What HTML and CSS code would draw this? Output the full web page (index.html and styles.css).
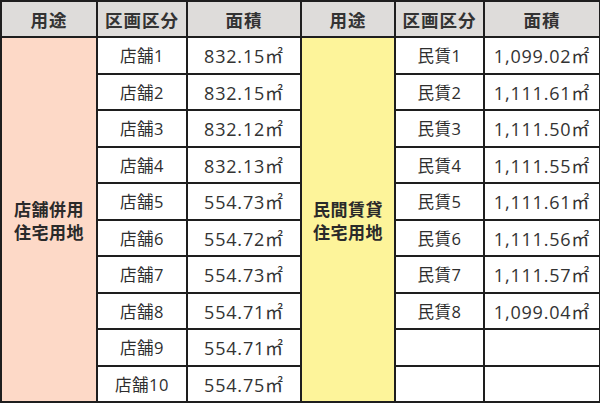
FILE: index.html
```html
<!DOCTYPE html>
<html lang="ja">
<head>
<meta charset="utf-8">
<link rel="stylesheet" href="styles.css">
</head>
<body>
<table class="lots">
  <colgroup>
    <col class="c-use"><col class="c-lot"><col class="c-area">
    <col class="c-use2"><col class="c-lot2"><col class="c-area2">
  </colgroup>
  <thead>
    <tr class="head">
      <th>用途</th><th>区画区分</th><th>面積</th>
      <th class="split">用途</th><th>区画区分</th><th>面積</th>
    </tr>
  </thead>
  <tbody>
    <tr>
      <td class="use shop" rowspan="10">店舗併用<br>住宅用地</td>
      <td class="lot">店舗1</td><td class="area">832.15㎡</td>
      <td class="use rent split" rowspan="10">民間賃貸<br>住宅用地</td>
      <td class="lot">民賃1</td><td class="area">1,099.02㎡</td>
    </tr>
    <tr><td class="lot">店舗2</td><td class="area">832.15㎡</td><td class="lot">民賃2</td><td class="area">1,111.61㎡</td></tr>
    <tr><td class="lot">店舗3</td><td class="area">832.12㎡</td><td class="lot">民賃3</td><td class="area">1,111.50㎡</td></tr>
    <tr><td class="lot">店舗4</td><td class="area">832.13㎡</td><td class="lot">民賃4</td><td class="area">1,111.55㎡</td></tr>
    <tr><td class="lot">店舗5</td><td class="area">554.73㎡</td><td class="lot">民賃5</td><td class="area">1,111.61㎡</td></tr>
    <tr><td class="lot">店舗6</td><td class="area">554.72㎡</td><td class="lot">民賃6</td><td class="area">1,111.56㎡</td></tr>
    <tr><td class="lot">店舗7</td><td class="area">554.73㎡</td><td class="lot">民賃7</td><td class="area">1,111.57㎡</td></tr>
    <tr><td class="lot">店舗8</td><td class="area">554.71㎡</td><td class="lot">民賃8</td><td class="area">1,099.04㎡</td></tr>
    <tr><td class="lot">店舗9</td><td class="area">554.71㎡</td><td class="lot"></td><td class="area"></td></tr>
    <tr><td class="lot">店舗10</td><td class="area">554.75㎡</td><td class="lot"></td><td class="area"></td></tr>
  </tbody>
</table>
</body>
</html>
```

FILE: styles.css
```css
html, body {
  margin: 0;
  padding: 0;
  background: #ffffff;
}

body {
  width: 600px;
  height: 404px;
  overflow: hidden;
  font-family: "Noto Sans CJK JP", "Noto Sans", sans-serif;
  color: #2e2e2e;
}

.lots {
  width: 599px;
  height: 403px;
  border-collapse: collapse;
  table-layout: fixed;
  border: 2px solid #1e1e1e;
}

.c-use { width: 96px; }
.c-lot { width: 90px; }
.c-area { width: 114px; }
.c-use2 { width: 94px; }
.c-lot2 { width: 89px; }
.c-area2 { width: 116px; }

.lots th,
.lots td {
  border: 2px solid #1e1e1e;
  padding: 0;
  text-align: center;
  vertical-align: middle;
}

.head {
  height: 36px;
}

.head th {
  background: #dedcda;
  font-size: 17.5px;
  font-weight: 700;
  color: #333333;
  letter-spacing: 1px;
}

.lots tbody tr {
  height: 36.5px;
}

.lot {
  font-family: "Open Sans", "Noto Sans CJK JP", sans-serif;
  font-size: 16.5px;
  font-weight: 400;
  background: #ffffff;
  letter-spacing: 0.5px;
}

.area {
  font-family: "Open Sans", "Noto Sans CJK JP", sans-serif;
  font-size: 18px;
  font-weight: 400;
  background: #ffffff;
  letter-spacing: 0.8px;
  color: #333333;
}

.use {
  font-size: 17px;
  font-weight: 700;
  line-height: 23px;
  letter-spacing: 0.5px;
  color: #2a2a2a;
}

.shop {
  background: #fdd9c7;
}

.rent {
  background: #fdf49a;
}
```
